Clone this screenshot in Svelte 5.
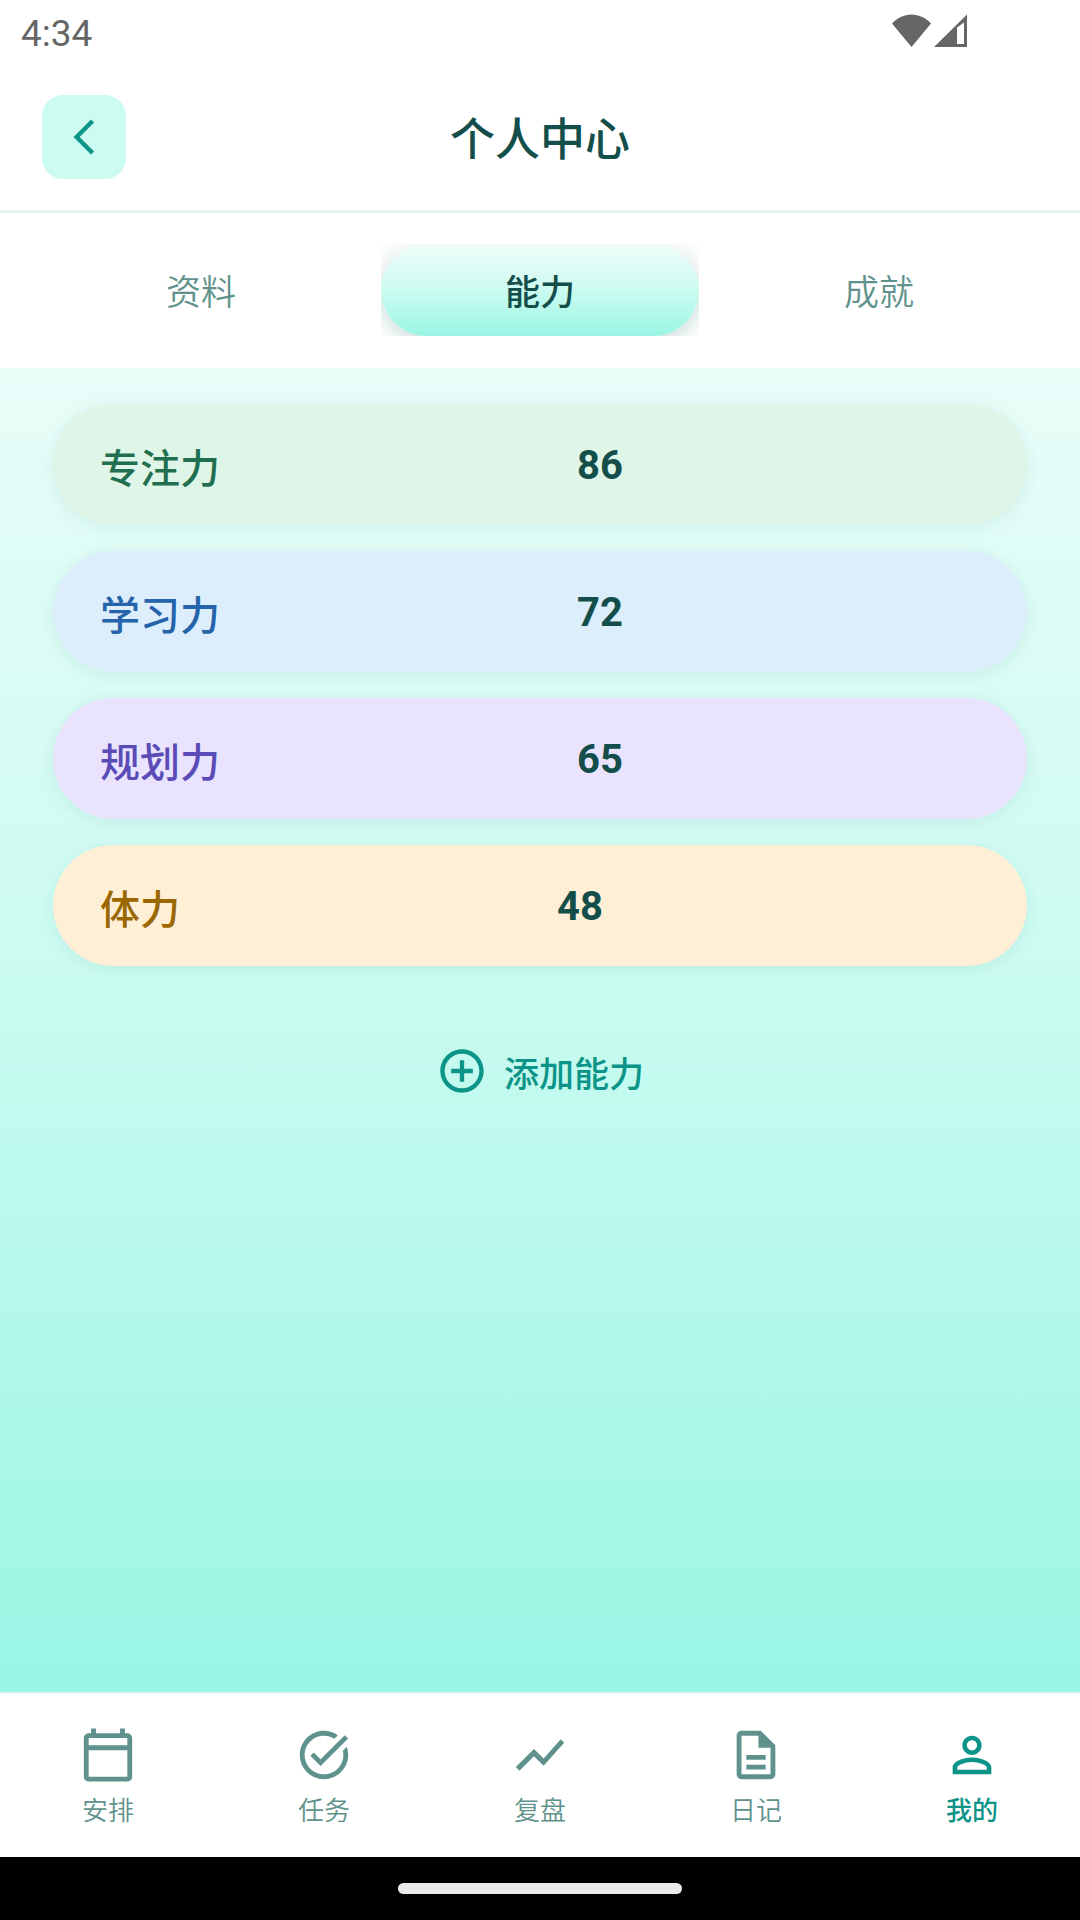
<script lang="ts">
  interface Ability {
    name: string;
    value: number;
    tone: string;
  }

  interface NavItem {
    label: string;
    icon: string;
  }

  const tabs = ["资料", "能力", "成就"];
  let activeTab = $state(1);

  const abilities: Ability[] = [
    { name: "专注力", value: 86, tone: "green" },
    { name: "学习力", value: 72, tone: "blue" },
    { name: "规划力", value: 65, tone: "purple" },
    { name: "体力", value: 48, tone: "orange" },
  ];

  const navItems: NavItem[] = [
    {
      label: "安排",
      icon: "M20 3h-1V1h-2v2H7V1H5v2H4c-1.1 0-2 .9-2 2v16c0 1.1.9 2 2 2h16c1.1 0 2-.9 2-2V5c0-1.1-.9-2-2-2zm0 18H4V10h16v11zm0-13H4V5h16v3z",
    },
    {
      label: "任务",
      icon: "M22 5.18L10.59 16.6l-4.24-4.24 1.41-1.41 2.83 2.83 10-10L22 5.18zm-2.21 5.04c.13.57.21 1.17.21 1.78 0 4.42-3.58 8-8 8s-8-3.58-8-8 3.58-8 8-8c1.58 0 3.04.46 4.28 1.25l1.44-1.44C16.1 2.67 14.13 2 12 2 6.48 2 2 6.48 2 12s4.48 10 10 10 10-4.48 10-10c0-1.19-.22-2.33-.6-3.39l-1.61 1.61z",
    },
    {
      label: "复盘",
      icon: "M3.5 18.49l6-6.01 4 4L22 6.92l-1.41-1.41-7.09 7.97-4-4L2 16.99z",
    },
    {
      label: "日记",
      icon: "M8 16h8v2H8zm0-4h8v2H8zm6-10H6c-1.1 0-2 .9-2 2v16c0 1.1.89 2 1.99 2H18c1.1 0 2-.9 2-2V8l-6-6zm4 18H6V4h7v5h5v11z",
    },
    {
      label: "我的",
      icon: "M12 5.9c1.16 0 2.1.94 2.1 2.1s-.94 2.1-2.1 2.1S9.9 9.16 9.9 8s.94-2.1 2.1-2.1m0 9c2.97 0 6.1 1.46 6.1 2.1v1.1H5.9V17c0-.64 3.13-2.1 6.1-2.1M12 4C9.79 4 8 5.79 8 8s1.79 4 4 4 4-1.79 4-4-1.79-4-4-4zm0 9c-2.67 0-8 1.34-8 4v3h16v-3c0-2.66-5.33-4-8-4z",
    },
  ];
  let activeNav = $state(4);
</script>

<div class="screen">
  <div class="status-bar">
    <span>4:34</span>
    <svg class="status-icons" viewBox="0 0 76 34" fill="currentColor" aria-hidden="true">
      <path d="M0 9.500C5 4 12 0.500 19.500 0.500S34 4 39 9.500L19.500 33z" />
      <path fill-rule="evenodd" d="M42 33L75 0.500V33zM65 13.500V30h7V8.500z" />
    </svg>
  </div>

  <header>
    <button class="back" aria-label="返回">
      <svg viewBox="0 0 24 24" fill="currentColor">
        <path d="M17.770 3.770L16 2 6 12l10 10 1.770-1.770L9.540 12z" />
      </svg>
    </button>
    <h1>个人中心</h1>
  </header>

  <div class="content">
    <div class="tabs" role="tablist">
      {#each tabs as tab, idx}
        <button
          class="tab"
          class:active={idx === activeTab}
          role="tab"
          aria-selected={idx === activeTab}
          onclick={() => (activeTab = idx)}
        >
          <span class="tab-pill">{tab}</span>
        </button>
      {/each}
    </div>

    <main>
      <ul class="abilities">
        {#each abilities as ability}
          <li class="ability {ability.tone}">
            <span class="name">{ability.name}</span>
            <span class="value">{ability.value}</span>
          </li>
        {/each}
      </ul>

      <button class="add">
        <svg viewBox="0 0 24 24" fill="currentColor" aria-hidden="true">
          <path d="M13 7h-2v4H7v2h4v4h2v-4h4v-2h-4V7zm-1-5C6.480 2 2 6.480 2 12s4.480 10 10 10 10-4.480 10-10S17.520 2 12 2zm0 18c-4.410 0-8-3.590-8-8s3.590-8 8-8 8 3.590 8 8-3.590 8-8 8z" />
        </svg>
        添加能力
      </button>
    </main>
  </div>

  <nav>
    {#each navItems as item, idx}
      <button class="nav-item" class:active={idx === activeNav} onclick={() => (activeNav = idx)}>
        <svg viewBox="0 0 24 24" fill="currentColor" aria-hidden="true">
          <path d={item.icon} />
        </svg>
        {item.label}
      </button>
    {/each}
  </nav>

  <!-- system gesture bar -->
  <div class="gesture-bar"><div class="handle"></div></div>
</div>

<style>
  :global(body) {
    margin: 0;
  }

  .screen {
    min-height: 100vh;
    display: flex;
    flex-direction: column;
    background: #fff;
    color: #134e4a;
    font-family: Roboto, "Noto Sans CJK SC", sans-serif;
  }

  button {
    padding: 0;
    border: none;
    background: none;
    color: inherit;
    font: inherit;
    cursor: pointer;
  }

  svg {
    display: block;
  }

  .status-bar {
    display: flex;
    align-items: center;
    justify-content: space-between;
    height: 66px;
    padding: 0 112px 0 21px;
    box-sizing: border-box;
    font-size: 37px;
    color: #666;
  }

  .status-icons {
    width: 76px;
    height: 34px;
    margin-bottom: 4px;
  }

  header {
    display: grid;
    grid-template-columns: 84px 1fr 84px;
    align-items: center;
    padding: 29px 42px 31px;
    border-bottom: 3px solid #e6f2f0;
  }

  .back {
    display: grid;
    place-items: center;
    height: 84px;
    border-radius: 21px;
    background: #ccfbf1;
    color: #0d9488;
  }

  .back svg {
    width: 42px;
    height: 42px;
  }

  h1 {
    margin: 0;
    padding-top: 8px;
    font-size: 45px;
    line-height: 64px;
    font-weight: 500;
    text-align: center;
  }

  .content {
    flex: 1;
    display: flex;
    flex-direction: column;
    background: linear-gradient(#f0fdfa, #ccfbf1 50%, #99f6e4);
  }

  .tabs {
    display: grid;
    grid-template-columns: repeat(3, 1fr);
    gap: 21px;
    padding: 31px 42px 32px;
    background: #fff;
  }

  .tab {
    overflow: hidden;
    font-size: 35px;
    font-weight: 350;
    color: #5f928c;
  }

  .tab-pill {
    display: block;
    padding-top: 8px;
    line-height: 84px;
    border-radius: 46px;
  }

  .tab.active {
    color: #134e4a;
    font-weight: 500;
  }

  .tab.active .tab-pill {
    background: linear-gradient(#f0fdfa, #ccfbf1 50%, #99f6e4);
    box-shadow: 0 5px 21px rgba(15, 100, 94, 0.25);
  }

  main {
    display: flex;
    flex-direction: column;
    align-items: center;
    padding: 36px 53px;
  }

  .abilities {
    align-self: stretch;
    display: flex;
    flex-direction: column;
    gap: 26px;
    margin: 0;
    padding: 0;
    list-style: none;
  }

  .ability {
    display: flex;
    align-items: center;
    justify-content: space-between;
    height: 121px;
    padding: 2px 47px 0;
    box-sizing: border-box;
    border-radius: 61px;
    box-shadow: 0 3px 16px rgba(19, 78, 74, 0.08);
    font-size: 40px;
  }

  /* empty trailing slot keeps the value between the two edges */
  .ability::after {
    content: "";
  }

  .name {
    font-weight: 500;
  }

  .value {
    font-weight: 700;
  }

  .green {
    background: #dff5e7;
  }

  .green .name {
    color: #1f6f50;
  }

  .blue {
    background: #dceefc;
  }

  .blue .name {
    color: #2563ab;
  }

  .purple {
    background: #e9e3fe;
  }

  .purple .name {
    color: #5b4bb7;
  }

  .orange {
    background: #ffefd6;
  }

  .orange .name {
    color: #9a6700;
  }

  .add {
    display: flex;
    align-items: center;
    gap: 16px;
    margin-top: 79px;
    font-size: 35px;
    font-weight: 500;
    color: #0d9488;
  }

  .add svg {
    width: 52px;
    height: 52px;
  }

  nav {
    display: grid;
    grid-template-columns: repeat(5, 1fr);
    padding: 32px 0 28px;
    border-top: 2px solid #e6f2f0;
  }

  .nav-item {
    display: flex;
    flex-direction: column;
    align-items: center;
    gap: 9px;
    font-size: 26px;
    line-height: 36px;
    font-weight: 350;
    color: #5f928c;
  }

  .nav-item svg {
    width: 58px;
    height: 58px;
  }

  .nav-item.active {
    color: #0d9488;
    font-weight: 500;
  }

  .gesture-bar {
    display: grid;
    place-items: center;
    height: 63px;
    background: #000;
  }

  .handle {
    width: 284px;
    height: 11px;
    border-radius: 6px;
    background: #ebebeb;
  }
</style>
